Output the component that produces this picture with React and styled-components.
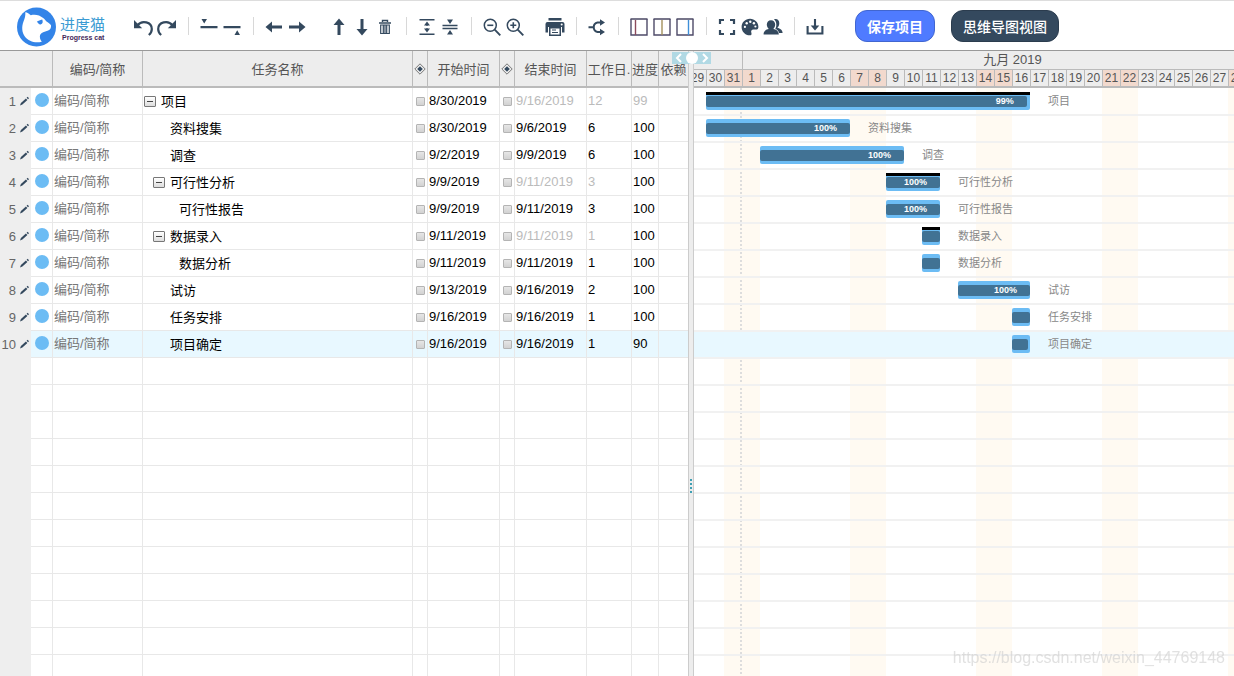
import React from "react";
import styled, { createGlobalStyle } from "styled-components";

const DAY = 18;
const ROW = 27;
const INK = "#34495e";

const GlobalStyle = createGlobalStyle`
  * { box-sizing: border-box; }
  body {
    margin: 0;
    background: #fff;
    font-family: "Liberation Sans", "Noto Sans CJK SC", sans-serif;
    font-size: 13px;
    color: #000;
  }
  button { font-family: inherit; padding: 0; border: 0; background: none; cursor: pointer; }
`;

const Page = styled.div`
  height: 100vh;
  display: flex;
  flex-direction: column;
  overflow: hidden;
`;

/* ---------- toolbar ---------- */

const Toolbar = styled.header`
  flex: none;
  display: flex;
  align-items: center;
  height: 51px;
  padding-left: 17px;
  border-top: 1px solid #ddd;
  border-bottom: 1px solid #999;
  overflow: hidden;
`;

const Brand = styled.a`
  display: flex;
  align-items: center;
  gap: 3px;
  width: 115px;
  padding-top: 2px;
  text-decoration: none;
`;

const BrandText = styled.span`
  display: flex;
  flex-direction: column;
  padding-top: 4px;
`;

const BrandName = styled.span`
  font-size: 15px;
  line-height: 18px;
  color: #3b9bd3;
`;

const BrandTag = styled.span`
  padding-left: 2px;
  font-size: 7px;
  font-weight: bold;
  line-height: 8px;
  color: #43285a;
`;

const ToolGroup = styled.div`
  flex: none;
  display: flex;
  padding-top: 2px;
  margin-left: ${(p) => p.$gap || 0}px;
`;

const ToolButton = styled.button`
  display: flex;
  align-items: center;
  justify-content: center;
  width: 23px;
  height: 24px;
  color: ${INK};
`;

const Separator = styled.span`
  flex: none;
  width: 1px;
  height: 18px;
  margin: 0 8px 0 10px;
  background: #d8d8d8;
`;

const ActionButton = styled.button`
  flex: none;
  height: 32px;
  padding: 0 11px;
  margin-left: ${(p) => p.$gap}px;
  border: 1px solid ${(p) => p.$edge};
  border-radius: 12px;
  background: ${(p) => p.$fill};
  color: #fff;
  font-size: 14px;
  font-weight: ${(p) => p.$weight};
`;

/* ---------- task table ---------- */

const Workspace = styled.main`
  flex: 1;
  min-height: 0;
  display: flex;
  overflow: hidden;
`;

const TablePane = styled.section`
  flex: none;
  width: 688px;
  overflow: hidden;
`;

const TaskTable = styled.table`
  width: 100%;
  table-layout: fixed;
  border-collapse: separate;
  border-spacing: 0;
`;

const HeadCell = styled.th`
  height: 37px;
  padding: 0;
  border-right: 1px solid #bbb;
  border-bottom: 2px solid #bbb;
  background: #ededed;
  color: #555;
  font-weight: normal;
  white-space: nowrap;
  overflow: hidden;
  &:last-child { border-right: 0; }
  svg { display: block; margin: 0 auto; }
`;

const Row = styled.tr`
  background: ${(p) => (p.$selected ? "#e8f8ff" : "#fff")};
`;

const Cell = styled.td`
  height: ${ROW}px;
  padding: 0 0 0 1px;
  border-right: 1px solid #e8e8e8;
  border-bottom: 1px solid #e8e8e8;
  color: ${(p) => (p.$muted ? "#bbb" : p.$soft ? "#777" : "#000")};
  line-height: 16px;
  white-space: nowrap;
  overflow: hidden;
  &:last-child { border-right: 0; }
`;

const GutterCell = styled.td`
  height: ${ROW}px;
  padding: 0;
  background: #eee;
`;

const Gutter = styled.div`
  display: flex;
  align-items: center;
  justify-content: flex-end;
  gap: 4px;
  padding: 0 2px 1px 0;
  color: #666;
  button { display: flex; color: ${INK}; }
`;

const StatusDot = styled.span`
  display: block;
  width: 14px;
  height: 14px;
  margin: 0 0 2px 3px;
  border-radius: 50%;
  background: #6cbcf4;
`;

const NameLine = styled.div`
  display: flex;
  align-items: center;
  gap: 5px;
  padding: 1px 0 0 ${(p) => p.$level * 9}px;
`;

const ToggleSlot = styled.span`
  flex: none;
  width: 12px;
  height: 11px;
`;

const Toggle = styled.button`
  flex: none;
  display: flex;
  align-items: center;
  justify-content: center;
  width: 12px;
  height: 11px;
  && { border: 1px solid #777; background: linear-gradient(#fff, #ddd); }
  border-radius: 1px;
  &::before { content: ""; width: 6px; height: 1px; background: #444; }
`;

const MilestoneBox = styled.input.attrs({ type: "checkbox" })`
  appearance: none;
  display: block;
  width: 9px;
  height: 9px;
  margin: 1px 0 0 2px;
  border: 1px solid #b4b4b4;
  border-radius: 1px;
  background: linear-gradient(#e6e6e6, #d2d2d2);
`;

/* ---------- splitter ---------- */

const Splitter = styled.div`
  position: relative;
  flex: none;
  display: flex;
  flex-direction: column;
  align-items: center;
  justify-content: center;
  gap: 2px;
  width: 6px;
  padding-top: 244px;
  border-left: 1px solid #ccc;
  border-right: 1px solid #ccc;
  background: #ededed;
  z-index: 2;
`;

const Grip = styled.span`
  width: 2px;
  height: 2px;
  background: #3fa0b4;
`;

const SplitControl = styled.div`
  position: absolute;
  top: 1px;
  left: -17px;
  display: flex;
  align-items: center;
  justify-content: space-between;
  width: 39px;
  height: 12px;
  background: #b1d9e4;
  button { display: flex; width: 13px; justify-content: center; }
`;

const SplitKnob = styled.span`
  flex: none;
  width: 12px;
  height: 12px;
  border-radius: 50%;
  background: #fff;
`;

/* ---------- timeline ---------- */

const TimelinePane = styled.section`
  flex: 1;
  min-width: 0;
  overflow: hidden;
`;

const TimelineTrack = styled.div`
  width: ${(p) => p.$days * DAY}px;
  margin-left: -6px;
`;

const TimelineHead = styled.div`
  height: 37px;
  border-bottom: 2px solid #bbb;
  background: #ededed;
  color: #555;
`;

const HeadLine = styled.div`
  display: flex;
  height: ${(p) => p.$height}px;
`;

const Month = styled.div`
  flex: none;
  width: ${(p) => p.$days * DAY}px;
  border-left: 1px solid #bbb;
  border-bottom: 1px solid #bbb;
  line-height: 18px;
  text-align: center;
`;

const Day = styled.div`
  flex: none;
  width: ${DAY}px;
  border-left: 1px solid #bbb;
  background: ${(p) => (p.$weekend ? "#f2d9cd" : "transparent")};
  font-size: 12px;
  line-height: 16px;
  text-align: center;
`;

const TimelineBody = styled.div`
  padding-top: 1px;
  background-image:
    linear-gradient(#ddd 50%, transparent 50%),
    linear-gradient(90deg, transparent 36px, #fffaf2 36px, #fffaf2 72px, transparent 72px);
  background-size: 2px 4px, 126px 100%;
  background-position: 52px 0, 0 0;
  background-repeat: repeat-y, repeat-x;
`;

const TimelineRow = styled.div`
  display: flex;
  align-items: flex-start;
  height: ${ROW}px;
  padding: 3px 0 0 ${(p) => p.$offset * DAY}px;
  border-bottom: 2px solid #f1f1f1;
  background: ${(p) => (p.$selected ? "#e8f8ff" : "transparent")};
`;

const Bar = styled.div`
  flex: none;
  width: ${(p) => p.$days * DAY}px;
  height: 18px;
  padding-top: ${(p) => (p.$summary ? 1 : 4)}px;
  border-top: ${(p) => (p.$summary ? "3px solid #000" : "0")};
  border-radius: ${(p) => (p.$summary ? "0 0 2px 2px" : "2px")};
  background: #6cbcf4;
`;

const Progress = styled.div`
  width: ${(p) => p.$percent}%;
  height: 11px;
  padding-right: 13px;
  border-radius: 2px;
  background: #417294;
  color: #fff;
  font-size: 9px;
  font-weight: bold;
  line-height: 11px;
  text-align: right;
`;

const BarLabel = styled.span`
  margin-left: 18px;
  color: #888;
  font-size: 11px;
  line-height: 18px;
  white-space: nowrap;
`;

const Watermark = styled.div`
  position: fixed;
  right: 9px;
  bottom: 9px;
  z-index: 3;
  color: rgba(205, 205, 205, 0.6);
  font-size: 16px;
  line-height: 18px;
`;

/* ---------- drawings ---------- */

const Icon = ({ w = 18, h = 18, children }) => (
  <svg width={w} height={h} viewBox={`0 0 ${w} ${h}`} fill="currentColor" aria-hidden="true">
    {children}
  </svg>
);

const stroke = (width) => ({ fill: "none", stroke: "currentColor", strokeWidth: width });

const Logo = () => (
  <svg width="40" height="40" viewBox="0 0 40 40" aria-hidden="true">
    <circle cx="19.5" cy="20" r="19.5" fill="#3384e8" />
    <path
      d="M8.300 5.200C10.200 5.300 12.200 6.700 13.800 8.200C16.500 7.500 19.500 7.600 22 8.600L24.200 9.800C26.500 11 28 12.600 29.200 14.200C31.200 15.500 33.200 16.700 34 18.200C34.400 20.800 33.200 22.800 30.500 23.800C27.500 24.700 24.500 25.300 23.200 27.800C22.400 29.800 23 32.500 24.800 34.700C18.500 36.500 11.500 34.500 8 29.800C4.800 25.500 4.500 19.500 6.500 14.500C7.800 11.500 8.600 8.500 8.300 5.200Z"
      fill="#fff"
    />
    <path d="M19.800 14.800C21.500 13.800 23 13.500 25.200 12.600C26.200 14.700 25.800 17.200 23.600 17.500C21.800 17.600 21 15.900 19.800 14.800Z" fill="#3384e8" />
  </svg>
);

const UndoIcon = () => (
  <Icon w={21}>
    <path d="M4.500 7.200C9 1.600 18.800 4 18.800 11c0 2.600-1.200 4.600-3 6" {...stroke(2.2)} />
    <path d="M1 2v8.200h8.200z" />
  </Icon>
);

const RedoIcon = () => (
  <Icon w={21}>
    <path d="M16.500 7.200C12 1.600 2.200 4 2.200 11c0 2.600 1.200 4.600 3 6" {...stroke(2.2)} />
    <path d="M20 2v8.200h-8.200z" />
  </Icon>
);

const AddAboveIcon = () => (
  <Icon>
    <path d="M0.500 8h17v2.200H0.500zM1.500 1h5.500L4.200 5.500z" />
  </Icon>
);

const AddBelowIcon = () => (
  <Icon>
    <path d="M0.500 8h17v2.200H0.500zM11.500 17h5.500L14.200 12.300z" />
  </Icon>
);

const ArrowIcon = ({ turn }) => (
  <Icon>
    <g transform={`rotate(${turn} 9 9)`}>
      <path d="M0.500 9l6.500-5.500v4h10v3h-10v4z" />
    </g>
  </Icon>
);

const TrashIcon = () => (
  <Icon w={14} h={16}>
    <path d="M4.500 3V1.500h5V3M1 4h12" {...stroke(1.4)} />
    <path d="M2.700 6v8.500h8.600V6zM5.300 6v8M7 6v8M8.700 6v8" {...stroke(1.2)} />
  </Icon>
);

const ExpandIcon = () => (
  <Icon>
    <path d="M1.500 1.800h15M1.500 16.200h15" {...stroke(1.6)} />
    <path d="M9 3.500l3 4H6zM9 14.500l3-4H6z" />
    <path d="M9 6v2M9 10v2" {...stroke(1.2)} />
  </Icon>
);

const CollapseIcon = () => (
  <Icon>
    <path d="M1.500 7.500h15M1.500 10.500h15" {...stroke(1.5)} />
    <path d="M6 1.500h6L9 6zM6 16.500h6L9 12z" />
  </Icon>
);

const ZoomIcon = ({ plus }) => (
  <Icon>
    <circle cx="7.300" cy="7.300" r="6" {...stroke(1.5)} />
    <path d="M11.700 11.700l5.600 5.600" {...stroke(1.9)} />
    <path d={plus ? "M4.300 7.300h6M7.300 4.300v6" : "M4.300 7.300h6"} {...stroke(1.6)} />
  </Icon>
);

const PrinterIcon = () => (
  <Icon w={20} h={20}>
    <path d="M3.500 1h13v2.500h-13z" />
    <path d="M2.500 5h15A2 2 0 0 1 19.500 7v8.500H.5V7a2 2 0 0 1 2-2z" />
    <path d="M3 10h14v9H3z" fill="#fff" />
    <path fillRule="evenodd" d="M4 10h12v9H4zM5.500 11.500v6h9v-6z" />
    <path d="M7 12.500h4v1H7zM7 15h6v1H7z" />
    <circle cx="16.700" cy="7.500" r="1" fill="#fff" />
  </Icon>
);

const BranchIcon = () => (
  <Icon>
    <path d="M0.500 9.200h5M13 4.500H9.500C4.500 5.500 4.500 13 9.500 14H13" {...stroke(2)} />
    <path d="M12 1.200l5 3.300-5 3.300zM12 10.700l5 3.300-5 3.300z" />
  </Icon>
);

const PaneIcon = ({ at, tone }) => (
  <Icon w={18} h={18}>
    <path d="M.5 1h17" stroke="#77758a" strokeWidth="2" />
    <path d="M1 1v16h16V1" fill="none" stroke="#4e4a68" strokeWidth="1.4" />
    <path d={`M${at} 2v15`} stroke={tone} strokeWidth="1.4" />
  </Icon>
);

const FullscreenIcon = () => (
  <Icon>
    <path d="M2 6V2h4M12 2h4v4M16 12v4h-4M6 16H2v-4" {...stroke(2.2)} />
  </Icon>
);

const PaletteIcon = () => (
  <Icon>
    <path d="M9 .7C4.200.7.600 4.300.600 9c0 4.600 3.600 8.300 8.200 8.300 1.500 0 2.100-1.200 1.600-2.400-.8-1.800.2-3.300 2-3.300h2.600c1.500 0 2.400-1 2.400-2.600C17.400 4.300 13.700.7 9 .7z" />
    <g fill="#fff">
      <circle cx="3.900" cy="8.900" r="1.100" />
      <circle cx="5.700" cy="5.200" r="1.200" />
      <circle cx="9.300" cy="3.700" r="1.200" />
      <circle cx="12.900" cy="5.200" r="1.200" />
      <circle cx="14.400" cy="8.500" r="1.100" />
    </g>
  </Icon>
);

const UsersIcon = () => (
  <Icon w={20}>
    <path d="M11 1.300c3.400-1 5.300 1.300 5.300 3.900 0 2-.9 3.700-2 4.500 2.900.8 5.300 2.300 5.300 5.200H16c-.4-2-1.800-3.200-3.700-4.100 1.700-2.600 1.400-7.200-1.300-9.500z" />
    <path d="M8 2.200c2.600 0 4.200 2 4.200 4.400 0 1.900-.8 3.500-1.900 4.400 3 .6 5.500 2 5.500 5.500H.6c0-3.500 2.300-4.900 5.200-5.500C4.600 10.100 3.800 8.500 3.800 6.600 3.800 4.200 5.400 2.200 8 2.200z" />
  </Icon>
);

const DownloadIcon = () => (
  <Icon>
    <path d="M1.600 8v7.500h14.800V8M9 1v8" {...stroke(2.1)} />
    <path d="M4.700 7.500h8.600L9 12.500z" />
  </Icon>
);

const PencilIcon = () => (
  <Icon w={9} h={10}>
    <path d="M0 9.600l.9-2.500 5-4.700 1.500 1.500-5 4.700zM6.600 1.800l1.100-1 1.300 1.400-1 1z" />
  </Icon>
);

const DiamondIcon = () => (
  <Icon w={12} h={12}>
    <path d="M6 .8L11.200 6 6 11.200.8 6z" fill="none" stroke="#777" />
    <path d="M6 3.200L8.800 6 6 8.800 3.200 6z" fill={INK} />
  </Icon>
);

const Chevron = ({ d }) => (
  <svg width="8" height="10" viewBox="0 0 8 10" fill="none" stroke="#fff" strokeWidth="2" aria-hidden="true">
    <path d={d} />
  </svg>
);

/* ---------- data ---------- */

const TOOLS = [
  { items: [["撤销", <UndoIcon />], ["重做", <RedoIcon />]] },
  { sep: true, items: [["在上方插入", <AddAboveIcon />], ["在下方插入", <AddBelowIcon />]] },
  { sep: true, items: [["升级", <ArrowIcon turn={0} />], ["降级", <ArrowIcon turn={180} />]] },
  { gap: 19, items: [["上移", <ArrowIcon turn={90} />], ["下移", <ArrowIcon turn={270} />], ["删除", <TrashIcon />]] },
  { sep: true, items: [["展开", <ExpandIcon />], ["折叠", <CollapseIcon />]] },
  { sep: true, items: [["缩小", <ZoomIcon />], ["放大", <ZoomIcon plus />]] },
  { gap: 17, items: [["打印", <PrinterIcon />]] },
  { sep: true, items: [["关键路径", <BranchIcon />]] },
  {
    sep: true,
    items: [
      ["左侧视图", <PaneIcon at={5.5} tone="#8c4a5c" />],
      ["分栏视图", <PaneIcon at={9} tone="#a3905c" />],
      ["右侧视图", <PaneIcon at={12.5} tone="#3f8fd8" />],
    ],
  },
  { sep: true, items: [["全屏", <FullscreenIcon />], ["配色", <PaletteIcon />], ["成员", <UsersIcon />]] },
  { sep: true, items: [["导出", <DownloadIcon />]] },
];

const COLUMNS = [31, 22, 90, 270, 15, 72, 15, 72, 45, 27, 29];

/* "from" counts days after August 29 */
const TASKS = [
  { name: "项目", level: 0, parent: true, start: "8/30/2019", end: "9/16/2019", work: 12, done: 99, from: 1, days: 18, doneMuted: true },
  { name: "资料搜集", level: 1, start: "8/30/2019", end: "9/6/2019", work: 6, done: 100, from: 1, days: 8 },
  { name: "调查", level: 1, start: "9/2/2019", end: "9/9/2019", work: 6, done: 100, from: 4, days: 8 },
  { name: "可行性分析", level: 1, parent: true, start: "9/9/2019", end: "9/11/2019", work: 3, done: 100, from: 11, days: 3 },
  { name: "可行性报告", level: 2, start: "9/9/2019", end: "9/11/2019", work: 3, done: 100, from: 11, days: 3 },
  { name: "数据录入", level: 1, parent: true, start: "9/11/2019", end: "9/11/2019", work: 1, done: 100, from: 13, days: 1 },
  { name: "数据分析", level: 2, start: "9/11/2019", end: "9/11/2019", work: 1, done: 100, from: 13, days: 1 },
  { name: "试访", level: 1, start: "9/13/2019", end: "9/16/2019", work: 2, done: 100, from: 15, days: 4 },
  { name: "任务安排", level: 1, start: "9/16/2019", end: "9/16/2019", work: 1, done: 100, from: 18, days: 1 },
  { name: "项目确定", level: 1, start: "9/16/2019", end: "9/16/2019", work: 1, done: 90, from: 18, days: 1, selected: true },
];

const BLANKS = Array.from({ length: 40 }, (_, i) => i);

const MONTHS = [
  { label: "", first: 29, days: 3 },
  { label: "九月 2019", first: 1, days: 30 },
  { label: "十月 2019", first: 1, days: 31 },
];
const DATES = MONTHS.flatMap((m) => Array.from({ length: m.days }, (_, i) => m.first + i));

/* ---------- parts ---------- */

const TaskRow = ({ task, number }) => (
  <Row $selected={task.selected}>
    <GutterCell>
      <Gutter>
        {number}
        <button aria-label={`编辑 ${task.name}`}>
          <PencilIcon />
        </button>
      </Gutter>
    </GutterCell>
    <Cell><StatusDot /></Cell>
    <Cell $soft>编码/简称</Cell>
    <Cell>
      <NameLine $level={task.level}>
        {task.parent ? <Toggle aria-label={`折叠 ${task.name}`} /> : <ToggleSlot />}
        {task.name}
      </NameLine>
    </Cell>
    <Cell><MilestoneBox aria-label={`${task.name} 开始里程碑`} /></Cell>
    <Cell>{task.start}</Cell>
    <Cell><MilestoneBox aria-label={`${task.name} 结束里程碑`} /></Cell>
    <Cell $muted={task.parent}>{task.end}</Cell>
    <Cell $muted={task.parent}>{task.work}</Cell>
    <Cell $muted={task.doneMuted}>{task.done}</Cell>
    <Cell />
  </Row>
);

export default function App() {
  return (
    <Page>
      <GlobalStyle />
      <Toolbar>
        <Brand href="#">
          <Logo />
          <BrandText>
            <BrandName>进度猫</BrandName>
            <BrandTag>Progress cat</BrandTag>
          </BrandText>
        </Brand>
        {TOOLS.map((group, i) => (
          <React.Fragment key={i}>
            {group.sep && <Separator />}
            <ToolGroup $gap={group.gap}>
              {group.items.map(([label, icon]) => (
                <ToolButton key={label} aria-label={label}>{icon}</ToolButton>
              ))}
            </ToolGroup>
          </React.Fragment>
        ))}
        <ActionButton $gap={29} $fill="#4f7bff" $edge="#4166d0" $weight="bold">保存项目</ActionButton>
        <ActionButton $gap={16} $fill="#34495e" $edge="#2b3c4e" $weight="500">思维导图视图</ActionButton>
      </Toolbar>

      <Workspace>
        <TablePane>
          <TaskTable>
            <colgroup>
              {COLUMNS.map((w, i) => <col key={i} width={w} />)}
            </colgroup>
            <thead>
              <tr>
                <HeadCell colSpan={2} />
                <HeadCell>编码/简称</HeadCell>
                <HeadCell>任务名称</HeadCell>
                <HeadCell><DiamondIcon /></HeadCell>
                <HeadCell>开始时间</HeadCell>
                <HeadCell><DiamondIcon /></HeadCell>
                <HeadCell>结束时间</HeadCell>
                <HeadCell>工作日.</HeadCell>
                <HeadCell>进度</HeadCell>
                <HeadCell>依赖</HeadCell>
              </tr>
            </thead>
            <tbody>
              {TASKS.map((task, i) => <TaskRow key={task.name} task={task} number={i + 1} />)}
              {BLANKS.map((i) => (
                <Row key={i}>
                  <GutterCell />
                  {COLUMNS.slice(1).map((_, c) => <Cell key={c} />)}
                </Row>
              ))}
            </tbody>
          </TaskTable>
        </TablePane>

        <Splitter>
          <SplitControl>
            <button aria-label="收起左侧"><Chevron d="M6 1L2 5l4 4" /></button>
            <SplitKnob />
            <button aria-label="收起右侧"><Chevron d="M2 1l4 4-4 4" /></button>
          </SplitControl>
          <Grip /><Grip /><Grip /><Grip />
        </Splitter>

        <TimelinePane>
          <TimelineTrack $days={DATES.length}>
            <TimelineHead>
              <HeadLine $height={19}>
                {MONTHS.map((m) => <Month key={m.label} $days={m.days}>{m.label}</Month>)}
              </HeadLine>
              <HeadLine $height={16}>
                {DATES.map((d, i) => (
                  <Day key={i} $weekend={i % 7 === 2 || i % 7 === 3}>{d}</Day>
                ))}
              </HeadLine>
            </TimelineHead>
            <TimelineBody>
              {TASKS.map((t) => (
                <TimelineRow key={t.name} $offset={t.from} $selected={t.selected}>
                  <Bar $days={t.days} $summary={t.parent}>
                    <Progress $percent={t.done}>{t.days > 1 && `${t.done}%`}</Progress>
                  </Bar>
                  <BarLabel>{t.name}</BarLabel>
                </TimelineRow>
              ))}
              {BLANKS.map((i) => <TimelineRow key={i} $offset={0} />)}
            </TimelineBody>
          </TimelineTrack>
        </TimelinePane>
      </Workspace>
      <Watermark>https://blog.csdn.net/weixin_44769148</Watermark>
    </Page>
  );
}
